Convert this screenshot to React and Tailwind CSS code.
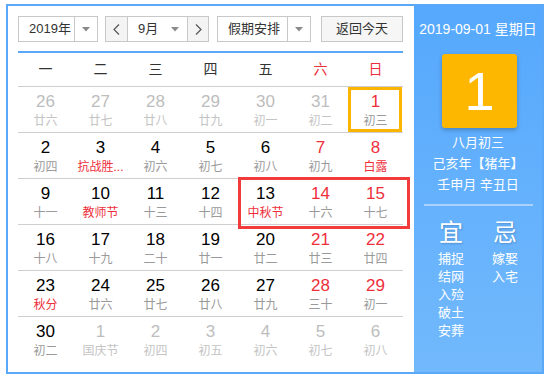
import React from "react";

const F = "font-['Liberation_Sans','Noto_Sans_CJK_SC',sans-serif]";

// kinds: o = other month, n = normal, r = red number, t = today
const rows = [
  [["26","廿六","o"],["27","廿七","o"],["28","廿八","o"],["29","廿九","o"],["30","初一","o"],["31","初二","o"],["1","初三","t"]],
  [["2","初四","n"],["3","抗战胜...","n",true],["4","初六","n"],["5","初七","n"],["6","初八","n"],["7","初九","r"],["8","白露","r",true]],
  [["9","十一","n"],["10","教师节","n",true],["11","十三","n"],["12","十四","n"],["13","中秋节","n",true],["14","十六","r"],["15","十七","r"]],
  [["16","十八","n"],["17","十九","n"],["18","二十","n"],["19","廿一","n"],["20","廿二","n"],["21","廿三","r"],["22","廿四","r"]],
  [["23","秋分","n",true],["24","廿六","n"],["25","廿七","n"],["26","廿八","n"],["27","廿九","n"],["28","三十","r"],["29","初一","r"]],
  [["30","初二","n"],["1","国庆节","o"],["2","初四","o"],["3","初五","o"],["4","初六","o"],["5","初七","o"],["6","初八","o"]],
];

function Arrow() {
  return (
    <svg width="8" height="5" viewBox="0 0 8 5">
      <path d="M0 0 L8 0 L4 4.5 Z" fill="#8a8a8a" />
    </svg>
  );
}

function Chev({ dir }) {
  return (
    <svg width="7" height="11" viewBox="0 0 7 11">
      <path
        d={dir === "l" ? "M6 0.5 L1 5.5 L6 10.5" : "M1 0.5 L6 5.5 L1 10.5"}
        fill="none"
        stroke="#555"
        strokeWidth="1.2"
      />
    </svg>
  );
}

function Cell({ d }) {
  const [num, lunar, kind, fest] = d;
  let numC = "text-black";
  let lunC = "text-[#9a9a9a]";
  if (kind === "o") {
    numC = "text-[#bdbdbd]";
    lunC = "text-[#c4c4c4]";
  } else if (kind === "r" || kind === "t") {
    numC = "text-[#ee2f3b]";
  }
  if (fest && kind !== "o") lunC = "text-[#ee2f3b]";
  return (
    <div className="relative flex flex-col items-center pt-[5px]">
      {kind === "t" && (
        <div className="absolute left-0 top-0 w-[54px] h-[45px] border-[3px] border-[#fbb400]" />
      )}
      <div className={`text-[17px] leading-[20px] ${numC}`}>{num}</div>
      <div className={`text-[12px] leading-[18px] whitespace-nowrap ${lunC}`}>{lunar}</div>
    </div>
  );
}

export default function App() {
  return (
    <div className={`w-[548px] h-[380px] bg-white pt-[4px] pl-[6px] ${F}`}>
      <div className="w-[538px] h-[370px] border-2 border-[#5aa9f8] flex">
        {/* left */}
        <div className="w-[406px] pt-[10px] pl-[10px] pr-[11px]">
          <div className="flex h-[26px] text-[13px] text-[#333]">
            <div className="w-[80px] flex border border-[#c8c8c8] bg-white">
              <div className="w-[55px] pl-[10px] flex items-center">2019年</div>
              <div className="flex-1 border-l border-[#c8c8c8] flex items-center justify-center"><Arrow /></div>
            </div>
            <div className="ml-[7px] w-[104px] flex border border-[#c8c8c8]">
              <div className="w-[21px] bg-[#f4f4f4] flex items-center justify-center"><Chev dir="l" /></div>
              <div className="w-[61px] border-l border-r border-[#c8c8c8] bg-white flex items-center">
                <span className="ml-[10px]">9月</span>
                <span className="ml-auto mr-[8px] flex"><Arrow /></span>
              </div>
              <div className="flex-1 bg-[#f4f4f4] flex items-center justify-center"><Chev dir="r" /></div>
            </div>
            <div className="ml-[8px] w-[94px] flex border border-[#c8c8c8] bg-white">
              <div className="w-[69px] pl-[10px] flex items-center">假期安排</div>
              <div className="flex-1 border-l border-[#c8c8c8] flex items-center justify-center"><Arrow /></div>
            </div>
            <div className="ml-[10px] w-[82px] border border-[#c8c8c8] bg-[#f6f6f6] flex items-center justify-center">返回今天</div>
          </div>

          <div className="mt-[9px] border-t-2 border-[#5aa9f8] h-[35px] grid grid-cols-7 items-center text-[14px] text-[#333]">
            {["一","二","三","四","五","六","日"].map((w, i) => (
              <div key={w} className={`text-center ${i >= 5 ? "text-[#ee2f3b]" : ""}`}>{w}</div>
            ))}
          </div>

          <div className="relative">
            {rows.map((r, i) => (
              <div key={i} className={`grid grid-cols-7 h-[46px] ${i === 0 ? "border-t border-[#cfcfcf]" : "border-t border-[#cfcfcf]"}`}>
                {r.map((d, j) => <Cell key={j} d={d} />)}
              </div>
            ))}
            <div className="absolute left-[220px] top-[91px] w-[172px] h-[52px] border-[3px] border-[#f23c3c]" />
          </div>
        </div>

        {/* right */}
        <div className="flex-1 bg-gradient-to-b from-[#55a8fd] to-[#72b9fc] flex flex-col text-white">
          <div className="pt-[13px] text-[14px] leading-[20px] text-center">2019-09-01 星期日</div>
          <div className="mt-[15px] ml-[28px] w-[75px] h-[74px] rounded-[3px] bg-[#fdb700] shadow-[0_2px_4px_rgba(0,0,0,0.25)] flex items-center justify-center text-[54px] leading-none">1</div>
          <div className="mt-[4px] text-[13px] leading-[21px] text-center">
            <div>八月初三</div>
            <div>己亥年【猪年】</div>
            <div>壬申月 辛丑日</div>
          </div>
          <div className="mt-[9px] ml-[10px] w-[109px] h-[2px] bg-[#a9d3fd]" />
          <div className="mt-[13px] px-[10px] grid grid-cols-2">
            <div className="flex flex-col items-center">
              <div className="text-[24px] leading-[28px] [text-shadow:1px_1px_2px_rgba(0,0,0,0.2)]">宜</div>
              <div className="mt-[3px] text-[13px] leading-[18px] text-center">
                <div>捕捉</div><div>结网</div><div>入殓</div><div>破土</div><div>安葬</div>
              </div>
            </div>
            <div className="flex flex-col items-center">
              <div className="text-[24px] leading-[28px] [text-shadow:1px_1px_2px_rgba(0,0,0,0.2)]">忌</div>
              <div className="mt-[3px] text-[13px] leading-[18px] text-center">
                <div>嫁娶</div><div>入宅</div>
              </div>
            </div>
          </div>
        </div>
      </div>
    </div>
  );
}
